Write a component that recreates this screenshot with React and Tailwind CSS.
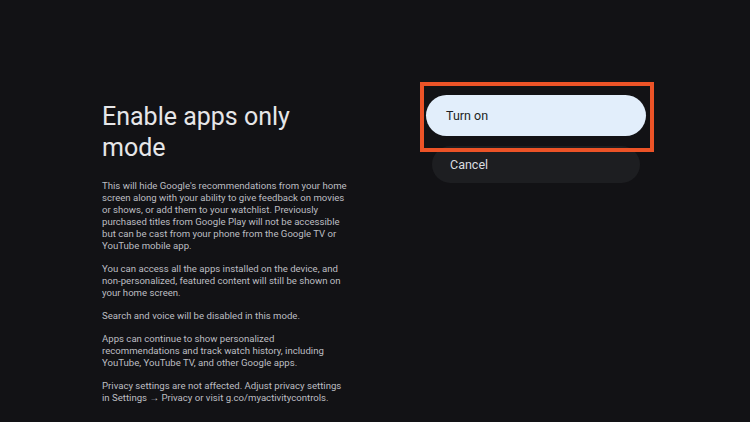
import React from 'react';

const paragraphs = [
  "This will hide Google's recommendations from your home screen along with your ability to give feedback on movies or shows, or add them to your watchlist. Previously purchased titles from Google Play will not be accessible but can be cast from your phone from the Google TV or YouTube mobile app.",
  'You can access all the apps installed on the device, and non-personalized, featured content will still be shown on your home screen.',
  'Search and voice will be disabled in this mode.',
  'Apps can continue to show personalized recommendations and track watch history, including YouTube, YouTube TV, and other Google apps.',
  'Privacy settings are not affected. Adjust privacy settings in Settings \u2192 Privacy or visit g.co/myactivitycontrols.',
];

export default function App() {
  return (
    <div
      className="w-[750px] h-[422px] bg-[#121215] flex overflow-hidden"
      style={{ fontFamily: 'Roboto, "Noto Sans", sans-serif' }}
    >
      {/* Left: description */}
      <div className="w-[426px] pl-[102px] pt-[101px]">
        <h1 className="w-[215px] text-[25px] leading-[31px] text-[#e6e6e8] font-normal">
          Enable apps only mode
        </h1>
        <div className="mt-[17px] w-[247px] flex flex-col gap-[11px]">
          {paragraphs.map((p, i) => (
            <p key={i} className="text-[9.6px] leading-[12px] text-[#bdbec2]">
              {p}
            </p>
          ))}
        </div>
      </div>

      {/* Right: actions */}
      <div className="pt-[95px] flex flex-col">
        <div className="relative">
          <button className="w-[220px] h-[41px] rounded-full bg-[#e2eefb] text-left pl-[20px] pt-[2px] text-[12.5px] font-normal text-[#1d1f23]">
            Turn on
          </button>
          <div className="absolute -left-[6px] -top-[13px] w-[234px] h-[70px] border-4 border-[#ec5327] pointer-events-none" />
        </div>
        <button className="mt-[10px] ml-[6px] w-[208px] h-[37px] rounded-full bg-[#1d1e21] text-left pl-[18px] pt-[2px] text-[12.5px] font-normal text-[#dcdde0]">
          Cancel
        </button>
      </div>
    </div>
  );
}
